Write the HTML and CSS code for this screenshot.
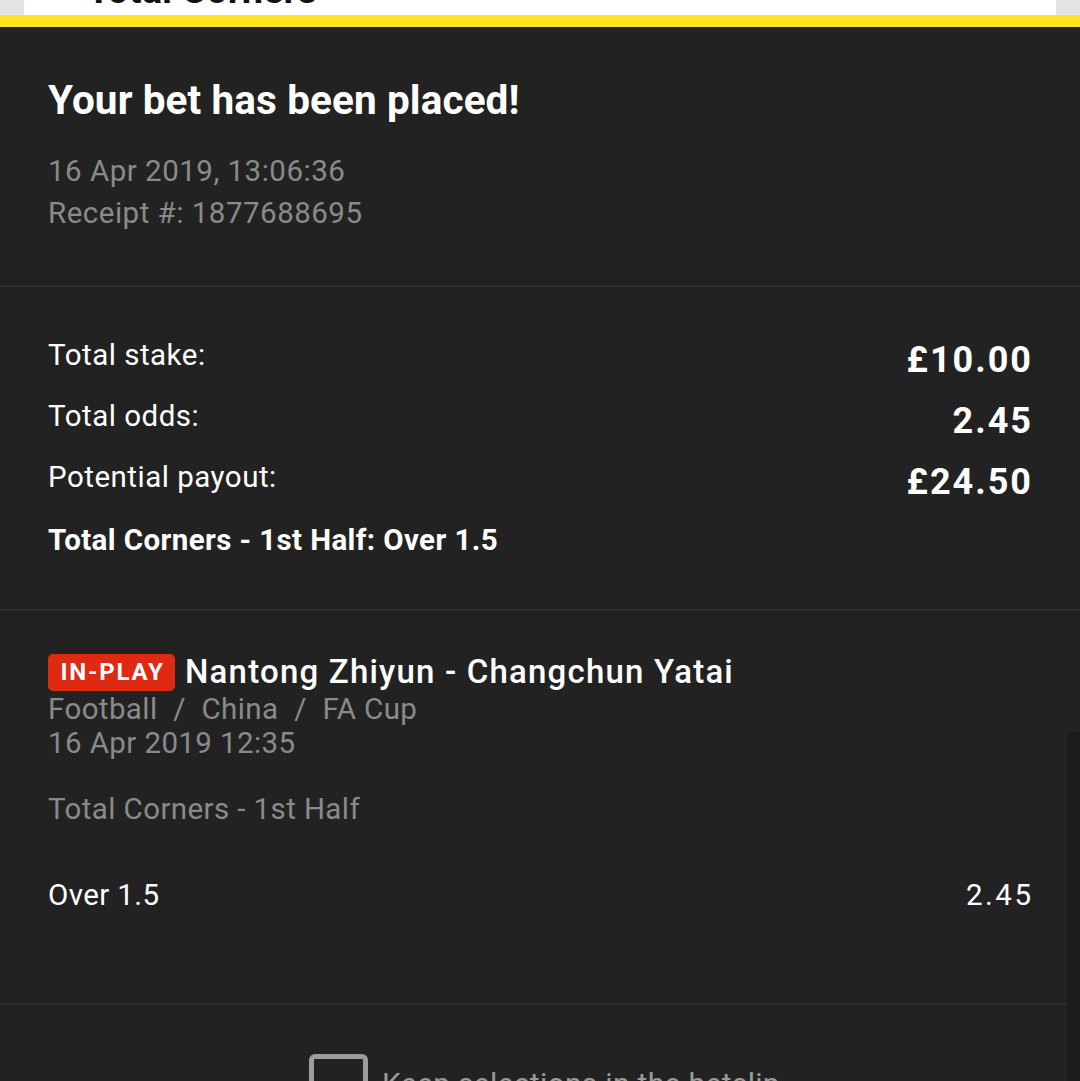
FILE: index.html
```html
<!DOCTYPE html>
<html lang="en">
<head>
<meta charset="utf-8">
<title>Bet placed</title>
<link rel="stylesheet" href="styles.css">
</head>
<body>
<div class="page">
  <div class="top-strip">
    <div class="top-card"><div class="top-card-text">Total Corners</div></div>
  </div>
  <div class="yellow-bar"></div>

  <section class="section header">
    <h1 class="title">Your bet has been placed!</h1>
    <div class="meta">16 Apr 2019, 13:06:36</div>
    <div class="meta">Receipt #: 1877688695</div>
  </section>

  <section class="section totals">
    <div class="row"><span class="label">Total stake:</span><span class="value">£10.00</span></div>
    <div class="row"><span class="label">Total odds:</span><span class="value">2.45</span></div>
    <div class="row"><span class="label">Potential payout:</span><span class="value">£24.50</span></div>
    <div class="market-bold">Total Corners - 1st Half: Over 1.5</div>
  </section>

  <section class="section selection">
    <div class="event-line">
      <span class="badge">IN-PLAY</span>
      <span class="event-name">Nantong Zhiyun - Changchun Yatai</span>
    </div>
    <div class="sub">Football <span class="slash">/</span> China <span class="slash">/</span> FA Cup</div>
    <div class="sub">16 Apr 2019 12:35</div>
    <div class="market">Total Corners - 1st Half</div>
    <div class="pick-row"><span>Over 1.5</span><span class="odds">2.45</span></div>
  </section>

  <section class="section keep">
    <div class="keep-line">
      <span class="checkbox"></span>
      <span class="keep-text">Keep selections in the betslip</span>
    </div>
  </section>

  <div class="scrollbar"></div>
</div>
</body>
</html>
```

FILE: styles.css
```css
* { box-sizing: border-box; }
html, body {
  margin: 0;
  padding: 0;
  background: #222222;
  height: 100%;
  overflow: hidden;
}
body {
  font-family: Roboto, "Liberation Sans", sans-serif;
  color: #ffffff;
}
.page {
  position: relative;
  width: 1080px;
  height: 1081px;
  overflow: hidden;
  background: #222222;
}
.top-strip {
  height: 15px;
  background: #e4e4e4;
  padding: 0 24px;
}
.top-card {
  height: 15px;
  background: #fffffd;
  overflow: hidden;
}
.top-card-text {
  margin-top: -30px;
  padding-left: 63px;
  font-size: 38px;
  line-height: 40px;
  font-weight: 700;
  color: #111;
}
.yellow-bar {
  height: 12px;
  background: #fde521;
}
.section {
  padding-left: 48px;
  padding-right: 49px;
}
.section + .section {
  border-top: 2px solid #2e2e2e;
}
.header {
  padding-top: 49px;
  height: 258px;
}
.title {
  margin: 0 0 26px 0;
  font-size: 40.5px;
  line-height: 48px;
  font-weight: 700;
  letter-spacing: 0.1px;
}
.meta {
  font-size: 29.5px;
  line-height: 42px;
  letter-spacing: 0.5px;
  color: #8a8a8a;
}
.totals {
  padding-top: 48px;
  height: 324px;
}
.row {
  display: flex;
  justify-content: space-between;
  align-items: flex-start;
  height: 61px;
}
.label {
  font-size: 29.5px;
  line-height: 40px;
  letter-spacing: 0.5px;
}
.value {
  font-size: 36px;
  line-height: 40px;
  font-weight: 700;
  letter-spacing: 2px;
  margin-right: -2px;
  margin-top: 5px;
}
.market-bold {
  margin-top: 2px;
  font-size: 29.5px;
  line-height: 40px;
  font-weight: 700;
  letter-spacing: 0.4px;
}
.selection {
  padding-top: 41px;
  height: 394px;
}
.event-line {
  display: flex;
  align-items: center;
  gap: 10px;
  height: 40px;
}
.badge {
  display: inline-flex;
  align-items: center;
  justify-content: center;
  width: 127px;
  height: 37px;
  background: #de2a12;
  border-radius: 5px;
  font-size: 24px;
  font-weight: 700;
  letter-spacing: 1.8px;
  padding-left: 2px;
  color: #fff;
}
.event-name {
  font-size: 33px;
  line-height: 40px;
  font-weight: 500;
  letter-spacing: 1.2px;
}
.sub {
  font-size: 29.5px;
  line-height: 34px;
  letter-spacing: 0.4px;
  color: #8a8a8a;
}
.slash {
  margin: 0 8px;
}
.market {
  margin-top: 32px;
  font-size: 29.5px;
  line-height: 34px;
  letter-spacing: 0.4px;
  color: #8a8a8a;
}
.pick-row {
  margin-top: 52px;
  display: flex;
  justify-content: space-between;
  font-size: 29.5px;
  line-height: 34px;
  letter-spacing: 0.4px;
}
.odds {
  letter-spacing: 2.5px;
  margin-right: -2.5px;
}
.keep {
  padding-top: 49px;
}
.keep-line {
  display: flex;
  align-items: center;
  justify-content: center;
  gap: 14px;
  padding-left: 10px;
}
.checkbox {
  width: 59px;
  height: 58px;
  border: 5px solid #9c9c9c;
  border-radius: 6px;
  flex: none;
}
.keep-text {
  font-size: 30px;
  letter-spacing: 0.3px;
  color: #9a9a9a;
}
.scrollbar {
  position: absolute;
  right: 0;
  top: 732px;
  width: 13px;
  height: 360px;
  background: #1c1c1c;
}
```
